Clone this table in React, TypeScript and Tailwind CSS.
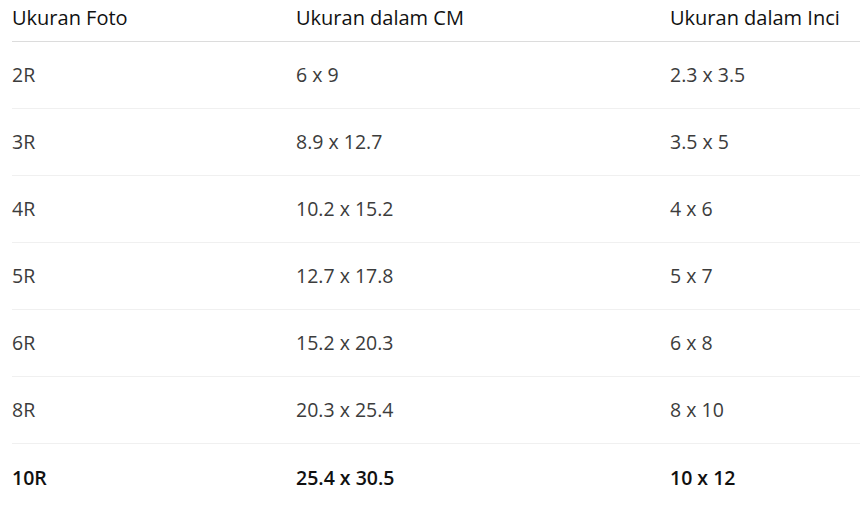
const rows = [
  ["2R", "6 x 9", "2.3 x 3.5"],
  ["3R", "8.9 x 12.7", "3.5 x 5"],
  ["4R", "10.2 x 15.2", "4 x 6"],
  ["5R", "12.7 x 17.8", "5 x 7"],
  ["6R", "15.2 x 20.3", "6 x 8"],
  ["8R", "20.3 x 25.4", "8 x 10"],
  ["10R", "25.4 x 30.5", "10 x 12"],
];

export default function App() {
  return (
    <div className="bg-white min-h-screen pl-3 pr-px font-['Open_Sans',sans-serif]">
      <div className="grid grid-cols-[284px_374px_1fr] h-[42px] items-center border-b border-[#dcdcdc] text-[20px] text-[#111] pb-[6px]">
        <div>Ukuran Foto</div>
        <div>Ukuran dalam CM</div>
        <div>Ukuran dalam Inci</div>
      </div>
      {rows.map((r, i) => {
        const last = i === rows.length - 1;
        return (
          <div
            key={r[0]}
            className={
              "grid grid-cols-[284px_374px_1fr] h-[67px] items-center text-[19.5px] " +
              (last ? "font-semibold text-[#111]" : "border-b border-[#f0f0f0] text-[#3c3c3c]")
            }
          >
            <div>{r[0]}</div>
            <div>{r[1]}</div>
            <div>{r[2]}</div>
          </div>
        );
      })}
    </div>
  );
}
